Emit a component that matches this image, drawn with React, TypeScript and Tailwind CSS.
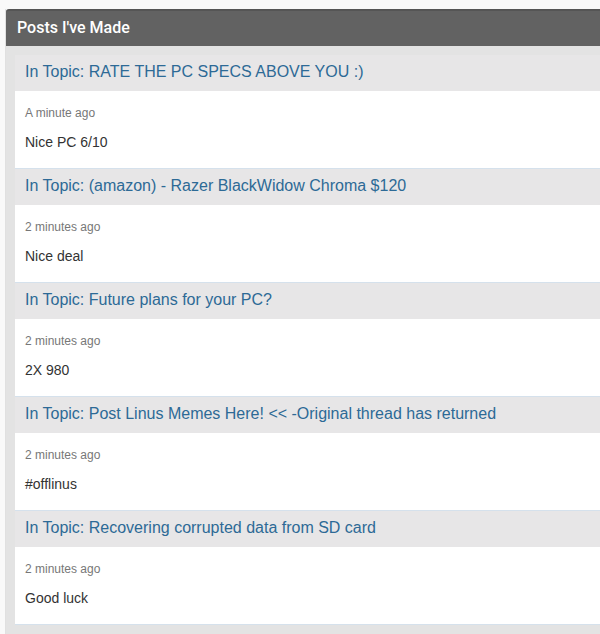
const posts = [
  { topic: 'RATE THE PC SPECS ABOVE YOU :)', time: 'A minute ago', body: 'Nice PC 6/10' },
  { topic: '(amazon) - Razer BlackWidow Chroma $120', time: '2 minutes ago', body: 'Nice deal' },
  { topic: 'Future plans for your PC?', time: '2 minutes ago', body: '2X 980' },
  { topic: 'Post Linus Memes Here! << -Original thread has returned', time: '2 minutes ago', body: '#offlinus' },
  { topic: 'Recovering corrupted data from SD card', time: '2 minutes ago', body: 'Good luck' },
];

export default function App() {
  return (
    <div className="h-[634px] overflow-hidden bg-[#f9f9f9] pt-[9px] pl-[5px]">
      <div className="border-l border-[#e0e0e0] h-full">
        <div className="h-[37px] rounded-tl-[3px] border-t-2 border-[#555555] bg-[#626262] flex items-center pl-[11px] pb-[1px]">
          <h2 className="text-white text-[16px] font-medium" style={{ fontFamily: 'Roboto, sans-serif' }}>
            Posts I've Made
          </h2>
        </div>
        <div className="bg-[#e3e3e3] pt-[9px] pl-[9px] h-full" style={{ fontFamily: '"Liberation Sans", Arial, sans-serif' }}>
          {posts.map((p) => (
            <div key={p.topic}>
              <div className="h-[36px] bg-[#e7e6e7] flex items-center pl-[10px] pb-[2px]">
                <a className="text-[#2d6a96] text-[16px]">In Topic: {p.topic}</a>
              </div>
              <div className="h-[78px] bg-white border-b border-[#d5e1ec] pl-[10px] pt-[14px]">
                <p className="text-[12px] text-[#777777] leading-[16px]">{p.time}</p>
                <p className="text-[14px] text-[#333333] leading-[18px] mt-[12px]">{p.body}</p>
              </div>
            </div>
          ))}
        </div>
      </div>
    </div>
  );
}
